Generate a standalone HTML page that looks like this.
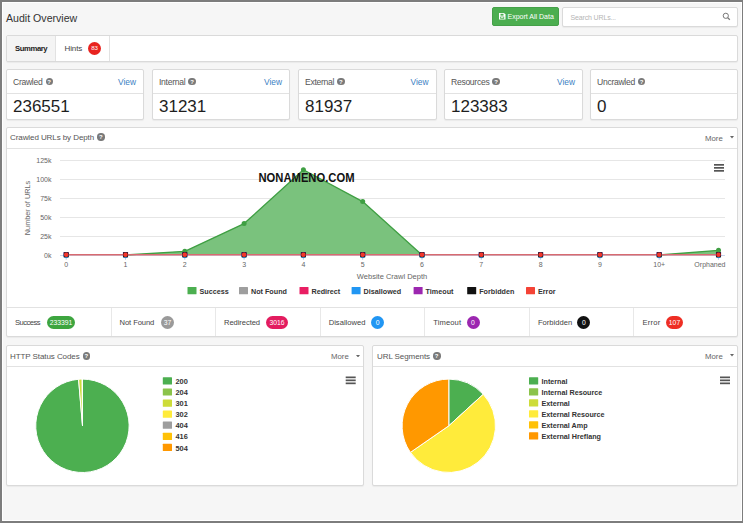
<!DOCTYPE html><html><head><meta charset="utf-8"><style>
*{box-sizing:border-box;margin:0;padding:0}
html,body{width:743px;height:523px;overflow:hidden}
body{background:#f6f6f6;font-family:"Liberation Sans",sans-serif;color:#333;position:relative}
.a{position:absolute;white-space:nowrap;line-height:1}
.frame{position:absolute;left:0;top:0;width:743px;height:523px;border-style:solid;border-color:#7d7d7d;border-width:2px 1px 2px 2px;pointer-events:none}
.frame:after{content:"";position:absolute;left:0;top:0;right:0;bottom:0;border:1px solid #fff}
.box{position:absolute;background:#fff;border:1px solid #dadada;border-radius:2px;box-shadow:0 1px 1px rgba(0,0,0,.05)}
.hl{position:absolute;height:1px;background:#e2e2e2}
.vl{position:absolute;width:1px;background:#e8e8e8}
.q{position:absolute;width:7px;height:7px;border-radius:50%;background:#7a7a7a}
.q:after{content:"?";position:absolute;left:0;top:0.5px;width:7px;text-align:center;color:#fff;font-size:6px;font-weight:bold;line-height:6px}
.qi{display:inline-block;position:relative;width:7.4px;height:7.4px;border-radius:50%;background:#7a7a7a;vertical-align:-0.8px;margin-left:1px}
.qi:after{content:"?";position:absolute;left:0;top:0.5px;width:7px;text-align:center;color:#fff;font-size:6px;font-weight:bold;line-height:6px}
.badge{position:absolute;height:13px;border-radius:6.5px;color:#fff;font-size:6.8px;line-height:13px;text-align:center;white-space:nowrap}
</style></head><body>
<div class="a" style="left:6px;top:13px;font-size:10.6px;color:#333;font-weight:normal;">Audit Overview</div>
<div class="a" style="left:492px;top:7px;width:67px;height:19px;background:#4cae50;border:1px solid #45a049;border-radius:2px"></div>
<svg class="a" style="left:499px;top:13.3px" width="6.5" height="6.5" viewBox="0 0 6.5 6.5"><path d="M0 0H5L6.5 1.5V6.5H0Z" fill="#fff"/><rect x="1.5" y="0.8" width="3" height="1.8" fill="#4cae50"/><rect x="1.2" y="3.6" width="4" height="2.2" fill="#4cae50"/><rect x="2" y="4.3" width="2.4" height="0.8" fill="#fff"/></svg>
<div class="a" style="left:507.5px;top:13px;font-size:7px;color:#fff;font-weight:normal;">Export All Data</div>
<div class="box" style="left:562px;top:7px;width:176px;height:20px;"></div>
<div class="a" style="left:570.5px;top:13.6px;font-size:7px;color:#b5b5b5;font-weight:normal;letter-spacing:-0.15px">Search URLs...</div>
<svg class="a" font-family="Liberation Sans" style="left:722px;top:12px" width="9" height="9" viewBox="0 0 9 9"><circle cx="3.8" cy="3.8" r="2.6" fill="none" stroke="#777" stroke-width="1"/><line x1="5.6" y1="5.6" x2="7.8" y2="7.8" stroke="#777" stroke-width="1.3"/></svg>
<div class="box" style="left:6px;top:35px;width:732px;height:27px;"></div>
<div class="a" style="left:7px;top:36px;width:49px;height:25px;background:#f4f4f4;border-right:1px solid #e2e2e2;border-radius:2px 0 0 2px"></div>
<div class="a" style="left:56px;top:36px;width:54px;height:25px;border-right:1px solid #e2e2e2"></div>
<div class="a" style="left:15px;top:45px;font-size:7.7px;color:#222;font-weight:bold;letter-spacing:-0.4px">Summary</div>
<div class="a" style="left:64.5px;top:45px;font-size:8px;color:#444;font-weight:normal;letter-spacing:-0.1px">Hints</div>
<div class="a" style="left:88px;top:41.5px;width:13px;height:13px;border-radius:50%;background:#e8231f"></div>
<div class="a" style="left:88px;top:45.2px;font-size:6.2px;color:#fff;font-weight:normal;width:13px;text-align:center;letter-spacing:-0.2px">83</div>
<div class="box" style="left:6px;top:69px;width:138px;height:51px;"></div>
<div class="hl" style="left:7px;top:93px;width:136px;"></div>
<div class="a" style="left:13px;top:77.6px;font-size:8.6px;color:#555;font-weight:normal;letter-spacing:-0.3px">Crawled <span class="qi"></span></div>
<div class="a" style="left:118px;top:77.5px;font-size:8.4px;color:#3a80c3;font-weight:normal;">View</div>
<div class="a" style="left:13px;top:98px;font-size:17px;color:#1e1e1e;font-weight:normal;">236551</div>
<div class="box" style="left:152px;top:69px;width:138px;height:51px;"></div>
<div class="hl" style="left:153px;top:93px;width:136px;"></div>
<div class="a" style="left:159px;top:77.6px;font-size:8.6px;color:#555;font-weight:normal;letter-spacing:-0.3px">Internal <span class="qi"></span></div>
<div class="a" style="left:264px;top:77.5px;font-size:8.4px;color:#3a80c3;font-weight:normal;">View</div>
<div class="a" style="left:159px;top:98px;font-size:17px;color:#1e1e1e;font-weight:normal;">31231</div>
<div class="box" style="left:298px;top:69px;width:138.5px;height:51px;"></div>
<div class="hl" style="left:299px;top:93px;width:136.5px;"></div>
<div class="a" style="left:305px;top:77.6px;font-size:8.6px;color:#555;font-weight:normal;letter-spacing:-0.3px">External <span class="qi"></span></div>
<div class="a" style="left:410.5px;top:77.5px;font-size:8.4px;color:#3a80c3;font-weight:normal;">View</div>
<div class="a" style="left:305px;top:98px;font-size:17px;color:#1e1e1e;font-weight:normal;">81937</div>
<div class="box" style="left:444px;top:69px;width:139px;height:51px;"></div>
<div class="hl" style="left:445px;top:93px;width:137px;"></div>
<div class="a" style="left:451px;top:77.6px;font-size:8.6px;color:#555;font-weight:normal;letter-spacing:-0.3px">Resources <span class="qi"></span></div>
<div class="a" style="left:557px;top:77.5px;font-size:8.4px;color:#3a80c3;font-weight:normal;">View</div>
<div class="a" style="left:451px;top:98px;font-size:17px;color:#1e1e1e;font-weight:normal;">123383</div>
<div class="box" style="left:590px;top:69px;width:148px;height:51px;"></div>
<div class="hl" style="left:591px;top:93px;width:146px;"></div>
<div class="a" style="left:597px;top:77.6px;font-size:8.6px;color:#555;font-weight:normal;letter-spacing:-0.3px">Uncrawled <span class="qi"></span></div>
<div class="a" style="left:597px;top:98px;font-size:17px;color:#1e1e1e;font-weight:normal;">0</div>
<div class="box" style="left:6px;top:127px;width:732px;height:210px;"></div>
<div class="hl" style="left:7px;top:148px;width:730px;"></div>
<div class="a" style="left:10px;top:133.3px;font-size:8px;color:#555;font-weight:normal;letter-spacing:-0.08px">Crawled URLs by Depth <span class="qi"></span></div>
<div class="a" style="left:705px;top:134.5px;font-size:7.8px;color:#666;font-weight:normal;">More</div>
<svg class="a" font-family="Liberation Sans" style="left:730.2px;top:136.3px" width="4" height="2.5"><path d="M0 0H4L2 2.5Z" fill="#666"/></svg>
<div class="hl" style="left:7px;top:307px;width:730px;"></div>
<div class="a" style="left:15.0px;top:318.5px;font-size:7.6px;color:#444;letter-spacing:-0.53px">Success</div>
<div class="badge" style="left:47px;top:315.6px;width:28px;background:#3da53f">233391</div>
<div class="vl" style="left:110.6px;top:308px;height:28px;"></div>
<div class="a" style="left:119.6px;top:318.5px;font-size:7.6px;color:#444;letter-spacing:-0.09px">Not Found</div>
<div class="badge" style="left:160.6px;top:315.6px;width:13.7px;background:#9a9a9a">37</div>
<div class="vl" style="left:215.1px;top:308px;height:28px;"></div>
<div class="a" style="left:224.1px;top:318.5px;font-size:7.6px;color:#444;letter-spacing:-0.09px">Redirected</div>
<div class="badge" style="left:266.3px;top:315.6px;width:21.3px;background:#e31c5f">3016</div>
<div class="vl" style="left:319.7px;top:308px;height:28px;"></div>
<div class="a" style="left:328.7px;top:318.5px;font-size:7.6px;color:#444;letter-spacing:0.00px">Disallowed</div>
<div class="badge" style="left:371.1px;top:315.6px;width:13px;background:#2196f3">0</div>
<div class="vl" style="left:424.3px;top:308px;height:28px;"></div>
<div class="a" style="left:433.3px;top:318.5px;font-size:7.6px;color:#444;letter-spacing:0.09px">Timeout</div>
<div class="badge" style="left:466.5px;top:315.6px;width:13px;background:#9c27b0">0</div>
<div class="vl" style="left:528.9px;top:308px;height:28px;"></div>
<div class="a" style="left:537.9px;top:318.5px;font-size:7.6px;color:#444;letter-spacing:0.02px">Forbidden</div>
<div class="badge" style="left:577.4px;top:315.6px;width:13px;background:#111">0</div>
<div class="vl" style="left:633.4px;top:308px;height:28px;"></div>
<div class="a" style="left:642.4px;top:318.5px;font-size:7.6px;color:#444;letter-spacing:0.26px">Error</div>
<div class="badge" style="left:666px;top:315.6px;width:17px;background:#ee2e24">107</div>
<div class="box" style="left:6px;top:345px;width:358px;height:141px;"></div>
<div class="hl" style="left:7px;top:366px;width:356px;"></div>
<div class="a" style="left:10px;top:352.2px;font-size:8px;color:#555;font-weight:normal;letter-spacing:-0.08px">HTTP Status Codes <span class="qi"></span></div>
<div class="a" style="left:331px;top:353px;font-size:7.8px;color:#666;font-weight:normal;">More</div>
<svg class="a" font-family="Liberation Sans" style="left:356px;top:354.5px" width="4" height="2.5"><path d="M0 0H4L2 2.5Z" fill="#666"/></svg>
<div class="box" style="left:372px;top:345px;width:366px;height:141px;"></div>
<div class="hl" style="left:373px;top:366px;width:364px;"></div>
<div class="a" style="left:377px;top:352.2px;font-size:8px;color:#555;font-weight:normal;letter-spacing:-0.08px">URL Segments <span class="qi"></span></div>
<div class="a" style="left:705px;top:353px;font-size:7.8px;color:#666;font-weight:normal;">More</div>
<svg class="a" font-family="Liberation Sans" style="left:730px;top:354.4px" width="4" height="2.5"><path d="M0 0H4L2 2.5Z" fill="#666"/></svg>
<svg class="a" font-family="Liberation Sans" style="left:0;top:0" width="743" height="523" viewBox="0 0 743 523">
<line x1="60" y1="160.5" x2="725" y2="160.5" stroke="#e6e6e6" stroke-width="1"/>
<line x1="60" y1="179.5" x2="725" y2="179.5" stroke="#e6e6e6" stroke-width="1"/>
<line x1="60" y1="198.5" x2="725" y2="198.5" stroke="#e6e6e6" stroke-width="1"/>
<line x1="60" y1="217.5" x2="725" y2="217.5" stroke="#e6e6e6" stroke-width="1"/>
<line x1="60" y1="236.5" x2="725" y2="236.5" stroke="#e6e6e6" stroke-width="1"/>
<text x="51.5" y="163.0" font-size="7" fill="#666" text-anchor="end">125k</text>
<text x="51.5" y="182.0" font-size="7" fill="#666" text-anchor="end">100k</text>
<text x="51.5" y="201.0" font-size="7" fill="#666" text-anchor="end">75k</text>
<text x="51.5" y="220.0" font-size="7" fill="#666" text-anchor="end">50k</text>
<text x="51.5" y="239.0" font-size="7" fill="#666" text-anchor="end">25k</text>
<text x="51.5" y="258.0" font-size="7" fill="#666" text-anchor="end">0k</text>
<text transform="translate(29.5,208) rotate(-90)" font-size="7.3" fill="#666" text-anchor="middle">Number of URLs</text>
<line x1="60" y1="255.5" x2="725" y2="255.5" stroke="#ccd6eb" stroke-width="1"/>
<line x1="66.2" y1="255.5" x2="66.2" y2="260" stroke="#ccd6eb" stroke-width="1"/>
<text x="66.2" y="266.5" font-size="7" fill="#666" text-anchor="middle">0</text>
<line x1="125.5" y1="255.5" x2="125.5" y2="260" stroke="#ccd6eb" stroke-width="1"/>
<text x="125.5" y="266.5" font-size="7" fill="#666" text-anchor="middle">1</text>
<line x1="184.8" y1="255.5" x2="184.8" y2="260" stroke="#ccd6eb" stroke-width="1"/>
<text x="184.8" y="266.5" font-size="7" fill="#666" text-anchor="middle">2</text>
<line x1="244.1" y1="255.5" x2="244.1" y2="260" stroke="#ccd6eb" stroke-width="1"/>
<text x="244.1" y="266.5" font-size="7" fill="#666" text-anchor="middle">3</text>
<line x1="303.4" y1="255.5" x2="303.4" y2="260" stroke="#ccd6eb" stroke-width="1"/>
<text x="303.4" y="266.5" font-size="7" fill="#666" text-anchor="middle">4</text>
<line x1="362.7" y1="255.5" x2="362.7" y2="260" stroke="#ccd6eb" stroke-width="1"/>
<text x="362.7" y="266.5" font-size="7" fill="#666" text-anchor="middle">5</text>
<line x1="422.0" y1="255.5" x2="422.0" y2="260" stroke="#ccd6eb" stroke-width="1"/>
<text x="422.0" y="266.5" font-size="7" fill="#666" text-anchor="middle">6</text>
<line x1="481.3" y1="255.5" x2="481.3" y2="260" stroke="#ccd6eb" stroke-width="1"/>
<text x="481.3" y="266.5" font-size="7" fill="#666" text-anchor="middle">7</text>
<line x1="540.6" y1="255.5" x2="540.6" y2="260" stroke="#ccd6eb" stroke-width="1"/>
<text x="540.6" y="266.5" font-size="7" fill="#666" text-anchor="middle">8</text>
<line x1="599.9" y1="255.5" x2="599.9" y2="260" stroke="#ccd6eb" stroke-width="1"/>
<text x="599.9" y="266.5" font-size="7" fill="#666" text-anchor="middle">9</text>
<line x1="659.2" y1="255.5" x2="659.2" y2="260" stroke="#ccd6eb" stroke-width="1"/>
<text x="659.2" y="266.5" font-size="7" fill="#666" text-anchor="middle">10+</text>
<line x1="718.5" y1="255.5" x2="718.5" y2="260" stroke="#ccd6eb" stroke-width="1"/>
<text x="725.5" y="266.5" font-size="7" fill="#666" text-anchor="end">Orphaned</text>
<text x="392" y="279" font-size="7.5" fill="#666" text-anchor="middle">Website Crawl Depth</text>
<polygon points="66.2,255 66.2,255.0 125.5,255.0 184.8,251.3 244.1,223.6 303.4,169.7 362.7,201.6 422.0,255.0 481.3,255.0 540.6,255.0 599.9,255.0 659.2,255.0 718.5,250.3 718.5,255" fill="#7ac27d"/>
<polyline points="125.5,255.0 184.8,251.3 244.1,223.6 303.4,169.7 362.7,201.6 422.0,255.0" fill="none" stroke="#3f9f43" stroke-width="1.3" stroke-linejoin="round"/>
<polyline points="659.2,255.0 718.5,250.3" fill="none" stroke="#3f9f43" stroke-width="1.3" stroke-linejoin="round"/>
<circle cx="66.2" cy="255.0" r="2.5" fill="#3f9f43"/>
<circle cx="125.5" cy="255.0" r="2.5" fill="#3f9f43"/>
<circle cx="184.8" cy="251.3" r="2.5" fill="#3f9f43"/>
<circle cx="244.1" cy="223.6" r="2.5" fill="#3f9f43"/>
<circle cx="303.4" cy="169.7" r="2.5" fill="#3f9f43"/>
<circle cx="362.7" cy="201.6" r="2.5" fill="#3f9f43"/>
<circle cx="422.0" cy="255.0" r="2.5" fill="#3f9f43"/>
<circle cx="481.3" cy="255.0" r="2.5" fill="#3f9f43"/>
<circle cx="540.6" cy="255.0" r="2.5" fill="#3f9f43"/>
<circle cx="599.9" cy="255.0" r="2.5" fill="#3f9f43"/>
<circle cx="659.2" cy="255.0" r="2.5" fill="#3f9f43"/>
<circle cx="718.5" cy="250.3" r="2.5" fill="#3f9f43"/>
<line x1="66.2" y1="254.8" x2="718.5" y2="254.8" stroke="#d86a70" stroke-width="1.6"/>
<rect x="63.6" y="252.2" width="5.2" height="4" fill="#8e24aa"/>
<circle cx="66.2" cy="255.6" r="2.7" fill="#42a5f5"/>
<rect x="63.7" y="252.3" width="5" height="5" fill="#111"/>
<circle cx="66.2" cy="254.8" r="2.3" fill="#f4362c"/>
<rect x="122.9" y="252.2" width="5.2" height="4" fill="#8e24aa"/>
<circle cx="125.5" cy="255.6" r="2.7" fill="#42a5f5"/>
<rect x="123.0" y="252.3" width="5" height="5" fill="#111"/>
<circle cx="125.5" cy="254.8" r="2.3" fill="#f4362c"/>
<rect x="182.2" y="252.2" width="5.2" height="4" fill="#8e24aa"/>
<circle cx="184.8" cy="255.6" r="2.7" fill="#42a5f5"/>
<rect x="182.3" y="252.3" width="5" height="5" fill="#111"/>
<circle cx="184.8" cy="254.8" r="2.3" fill="#f4362c"/>
<rect x="241.5" y="252.2" width="5.2" height="4" fill="#8e24aa"/>
<circle cx="244.1" cy="255.6" r="2.7" fill="#42a5f5"/>
<rect x="241.6" y="252.3" width="5" height="5" fill="#111"/>
<circle cx="244.1" cy="254.8" r="2.3" fill="#f4362c"/>
<rect x="300.8" y="252.2" width="5.2" height="4" fill="#8e24aa"/>
<circle cx="303.4" cy="255.6" r="2.7" fill="#42a5f5"/>
<rect x="300.9" y="252.3" width="5" height="5" fill="#111"/>
<circle cx="303.4" cy="254.8" r="2.3" fill="#f4362c"/>
<rect x="360.1" y="252.2" width="5.2" height="4" fill="#8e24aa"/>
<circle cx="362.7" cy="255.6" r="2.7" fill="#42a5f5"/>
<rect x="360.2" y="252.3" width="5" height="5" fill="#111"/>
<circle cx="362.7" cy="254.8" r="2.3" fill="#f4362c"/>
<rect x="419.4" y="252.2" width="5.2" height="4" fill="#8e24aa"/>
<circle cx="422.0" cy="255.6" r="2.7" fill="#42a5f5"/>
<rect x="419.5" y="252.3" width="5" height="5" fill="#111"/>
<circle cx="422.0" cy="254.8" r="2.3" fill="#f4362c"/>
<rect x="478.7" y="252.2" width="5.2" height="4" fill="#8e24aa"/>
<circle cx="481.3" cy="255.6" r="2.7" fill="#42a5f5"/>
<rect x="478.8" y="252.3" width="5" height="5" fill="#111"/>
<circle cx="481.3" cy="254.8" r="2.3" fill="#f4362c"/>
<rect x="538.0" y="252.2" width="5.2" height="4" fill="#8e24aa"/>
<circle cx="540.6" cy="255.6" r="2.7" fill="#42a5f5"/>
<rect x="538.1" y="252.3" width="5" height="5" fill="#111"/>
<circle cx="540.6" cy="254.8" r="2.3" fill="#f4362c"/>
<rect x="597.3" y="252.2" width="5.2" height="4" fill="#8e24aa"/>
<circle cx="599.9" cy="255.6" r="2.7" fill="#42a5f5"/>
<rect x="597.4" y="252.3" width="5" height="5" fill="#111"/>
<circle cx="599.9" cy="254.8" r="2.3" fill="#f4362c"/>
<rect x="656.6" y="252.2" width="5.2" height="4" fill="#8e24aa"/>
<circle cx="659.2" cy="255.6" r="2.7" fill="#42a5f5"/>
<rect x="656.7" y="252.3" width="5" height="5" fill="#111"/>
<circle cx="659.2" cy="254.8" r="2.3" fill="#f4362c"/>
<rect x="715.9" y="252.2" width="5.2" height="4" fill="#8e24aa"/>
<circle cx="718.5" cy="255.6" r="2.7" fill="#42a5f5"/>
<rect x="716.0" y="252.3" width="5" height="5" fill="#111"/>
<circle cx="718.5" cy="254.8" r="2.3" fill="#f4362c"/>
<rect x="714" y="164" width="10" height="1.7" fill="#555"/>
<rect x="714" y="167" width="10" height="1.7" fill="#555"/>
<rect x="714" y="170" width="10" height="1.7" fill="#555"/>
<rect x="187.5" y="287" width="9" height="7.2" rx="0.5" fill="#4caf50"/>
<text x="199.5" y="293.5" font-size="7.2" font-weight="bold" fill="#333">Success</text>
<rect x="239" y="287" width="9" height="7.2" rx="0.5" fill="#9e9e9e"/>
<text x="251" y="293.5" font-size="7.2" font-weight="bold" fill="#333">Not Found</text>
<rect x="299.5" y="287" width="9" height="7.2" rx="0.5" fill="#e91e63"/>
<text x="311.5" y="293.5" font-size="7.2" font-weight="bold" fill="#333">Redirect</text>
<rect x="351.6" y="287" width="9" height="7.2" rx="0.5" fill="#2196f3"/>
<text x="363.6" y="293.5" font-size="7.2" font-weight="bold" fill="#333">Disallowed</text>
<rect x="413.6" y="287" width="9" height="7.2" rx="0.5" fill="#9c27b0"/>
<text x="425.6" y="293.5" font-size="7.2" font-weight="bold" fill="#333">Timeout</text>
<rect x="467.2" y="287" width="9" height="7.2" rx="0.5" fill="#111111"/>
<text x="479.2" y="293.5" font-size="7.2" font-weight="bold" fill="#333">Forbidden</text>
<rect x="526" y="287" width="9" height="7.2" rx="0.5" fill="#f44336"/>
<text x="538" y="293.5" font-size="7.2" font-weight="bold" fill="#333">Error</text>
<text x="258.5" y="182" font-size="12.3" font-weight="bold" fill="#111" textLength="96" lengthAdjust="spacingAndGlyphs">NONAMENO.COM</text>
<path d="M82.5,425.8 L82.50,379.10 A46.7,46.7 0 1 1 78.58,379.26 Z" fill="#4caf50" stroke="#fff" stroke-width="1" stroke-linejoin="round"/>
<path d="M82.5,425.8 L78.58,379.26 A46.7,46.7 0 0 1 82.32,379.10 Z" fill="#cddc39" stroke="#fff" stroke-width="1" stroke-linejoin="round"/>
<path d="M82.5,425.8 L82.32,379.10 A46.7,46.7 0 0 1 82.37,379.10 Z" fill="#9e9e9e" stroke="#fff" stroke-width="1" stroke-linejoin="round"/>
<path d="M82.5,425.8 L82.37,379.10 A46.7,46.7 0 0 1 82.50,379.10 Z" fill="#ff9800" stroke="#fff" stroke-width="1" stroke-linejoin="round"/>
<path d="M448.8,425.8 L448.80,379.10 A46.7,46.7 0 0 1 483.25,394.27 Z" fill="#4caf50" stroke="#fff" stroke-width="1" stroke-linejoin="round"/>
<path d="M448.8,425.8 L483.25,394.27 A46.7,46.7 0 1 1 410.40,452.38 Z" fill="#ffeb3b" stroke="#fff" stroke-width="1" stroke-linejoin="round"/>
<path d="M448.8,425.8 L410.40,452.38 A46.7,46.7 0 0 1 448.80,379.10 Z" fill="#ff9800" stroke="#fff" stroke-width="1" stroke-linejoin="round"/>
<rect x="345.7" y="376.5" width="10" height="1.7" fill="#555"/>
<rect x="345.7" y="379.5" width="10" height="1.7" fill="#555"/>
<rect x="345.7" y="382.5" width="10" height="1.7" fill="#555"/>
<rect x="720" y="376.5" width="10" height="1.7" fill="#555"/>
<rect x="720" y="379.5" width="10" height="1.7" fill="#555"/>
<rect x="720" y="382.5" width="10" height="1.7" fill="#555"/>
<rect x="162.8" y="377.3" width="9.2" height="7.2" rx="0.5" fill="#4caf50"/>
<text x="175.5" y="384.0" font-size="7.4" font-weight="bold" fill="#333">200</text>
<rect x="162.8" y="388.4" width="9.2" height="7.2" rx="0.5" fill="#8bc34a"/>
<text x="175.5" y="395.1" font-size="7.4" font-weight="bold" fill="#333">204</text>
<rect x="162.8" y="399.5" width="9.2" height="7.2" rx="0.5" fill="#cddc39"/>
<text x="175.5" y="406.2" font-size="7.4" font-weight="bold" fill="#333">301</text>
<rect x="162.8" y="410.5" width="9.2" height="7.2" rx="0.5" fill="#ffeb3b"/>
<text x="175.5" y="417.2" font-size="7.4" font-weight="bold" fill="#333">302</text>
<rect x="162.8" y="421.6" width="9.2" height="7.2" rx="0.5" fill="#9e9e9e"/>
<text x="175.5" y="428.3" font-size="7.4" font-weight="bold" fill="#333">404</text>
<rect x="162.8" y="432.7" width="9.2" height="7.2" rx="0.5" fill="#ffc107"/>
<text x="175.5" y="439.4" font-size="7.4" font-weight="bold" fill="#333">416</text>
<rect x="162.8" y="443.8" width="9.2" height="7.2" rx="0.5" fill="#ff9800"/>
<text x="175.5" y="450.5" font-size="7.4" font-weight="bold" fill="#333">504</text>
<rect x="529" y="377.2" width="9.2" height="7.2" rx="0.5" fill="#4caf50"/>
<text x="541.5" y="383.5" font-size="7.2" font-weight="bold" fill="#333">Internal</text>
<rect x="529" y="388.2" width="9.2" height="7.2" rx="0.5" fill="#8bc34a"/>
<text x="541.5" y="394.5" font-size="7.2" font-weight="bold" fill="#333">Internal Resource</text>
<rect x="529" y="399.2" width="9.2" height="7.2" rx="0.5" fill="#cddc39"/>
<text x="541.5" y="405.5" font-size="7.2" font-weight="bold" fill="#333">External</text>
<rect x="529" y="410.2" width="9.2" height="7.2" rx="0.5" fill="#ffeb3b"/>
<text x="541.5" y="416.5" font-size="7.2" font-weight="bold" fill="#333">External Resource</text>
<rect x="529" y="421.2" width="9.2" height="7.2" rx="0.5" fill="#ffc107"/>
<text x="541.5" y="427.5" font-size="7.2" font-weight="bold" fill="#333">External Amp</text>
<rect x="529" y="432.2" width="9.2" height="7.2" rx="0.5" fill="#ff9800"/>
<text x="541.5" y="438.5" font-size="7.2" font-weight="bold" fill="#333">External Hreflang</text>
</svg>
<div class="frame"></div>
</body></html>
